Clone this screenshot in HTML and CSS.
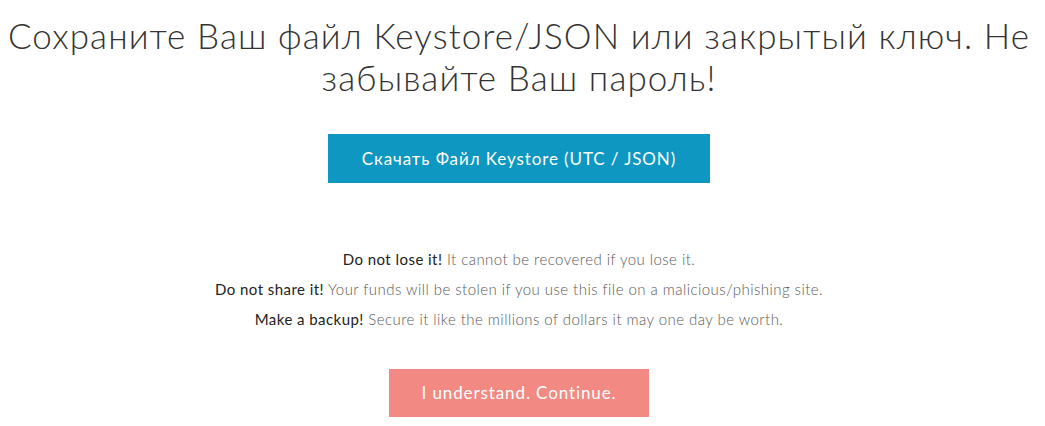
FILE: index.html
```html
<!DOCTYPE html>
<html>
<head>
<meta charset="utf-8">
<link rel="stylesheet" href="styles.css">
</head>
<body>
<main class="page">
  <h1 class="title">Сохраните Ваш файл Keystore/JSON или закрытый ключ. Не забывайте Ваш пароль!</h1>
  <a class="btn btn-primary">Скачать Файл Keystore (UTC / JSON)</a>
  <div class="warnings">
    <p><strong>Do not lose it!</strong> It cannot be recovered if you lose it.</p>
    <p><strong>Do not share it!</strong> Your funds will be stolen if you use this file on a malicious/phishing site.</p>
    <p><strong>Make a backup!</strong> Secure it like the millions of dollars it may one day be worth.</p>
  </div>
  <a class="btn btn-danger">I understand. Continue.</a>
</main>
</body>
</html>
```

FILE: styles.css
```css
html, body {
  margin: 0;
  padding: 0;
  background: #fff;
}
body {
  font-family: Lato, "Open Sans", sans-serif;
  color: #333;
}
.page {
  display: flex;
  flex-direction: column;
  align-items: center;
  padding: 0 7px 0 0;
  text-align: center;
}
.title {
  font-weight: 300;
  font-size: 35px;
  line-height: 42px;
  letter-spacing: 1.1px;
  margin: 14px 0 0 0;
  color: #333;
}
.btn {
  display: block;
  color: #fff;
  font-size: 17px;
  letter-spacing: 0.9px;
  text-decoration: none;
}
.btn-primary {
  background: #0e97c1;
  margin-top: 36px;
  width: 382px;
  height: 49px;
  line-height: 49px;
}
.warnings {
  margin-top: 61px;
  font-size: 15px;
  font-weight: 300;
  letter-spacing: 0.45px;
  color: #5a5a5a;
}
.warnings p {
  margin: 0;
  line-height: 30px;
}
.warnings strong {
  font-weight: 400;
  color: #222;
}
.btn-danger {
  background: #f28982;
  margin-top: 35px;
  width: 260px;
  height: 48px;
  line-height: 48px;
}
```
